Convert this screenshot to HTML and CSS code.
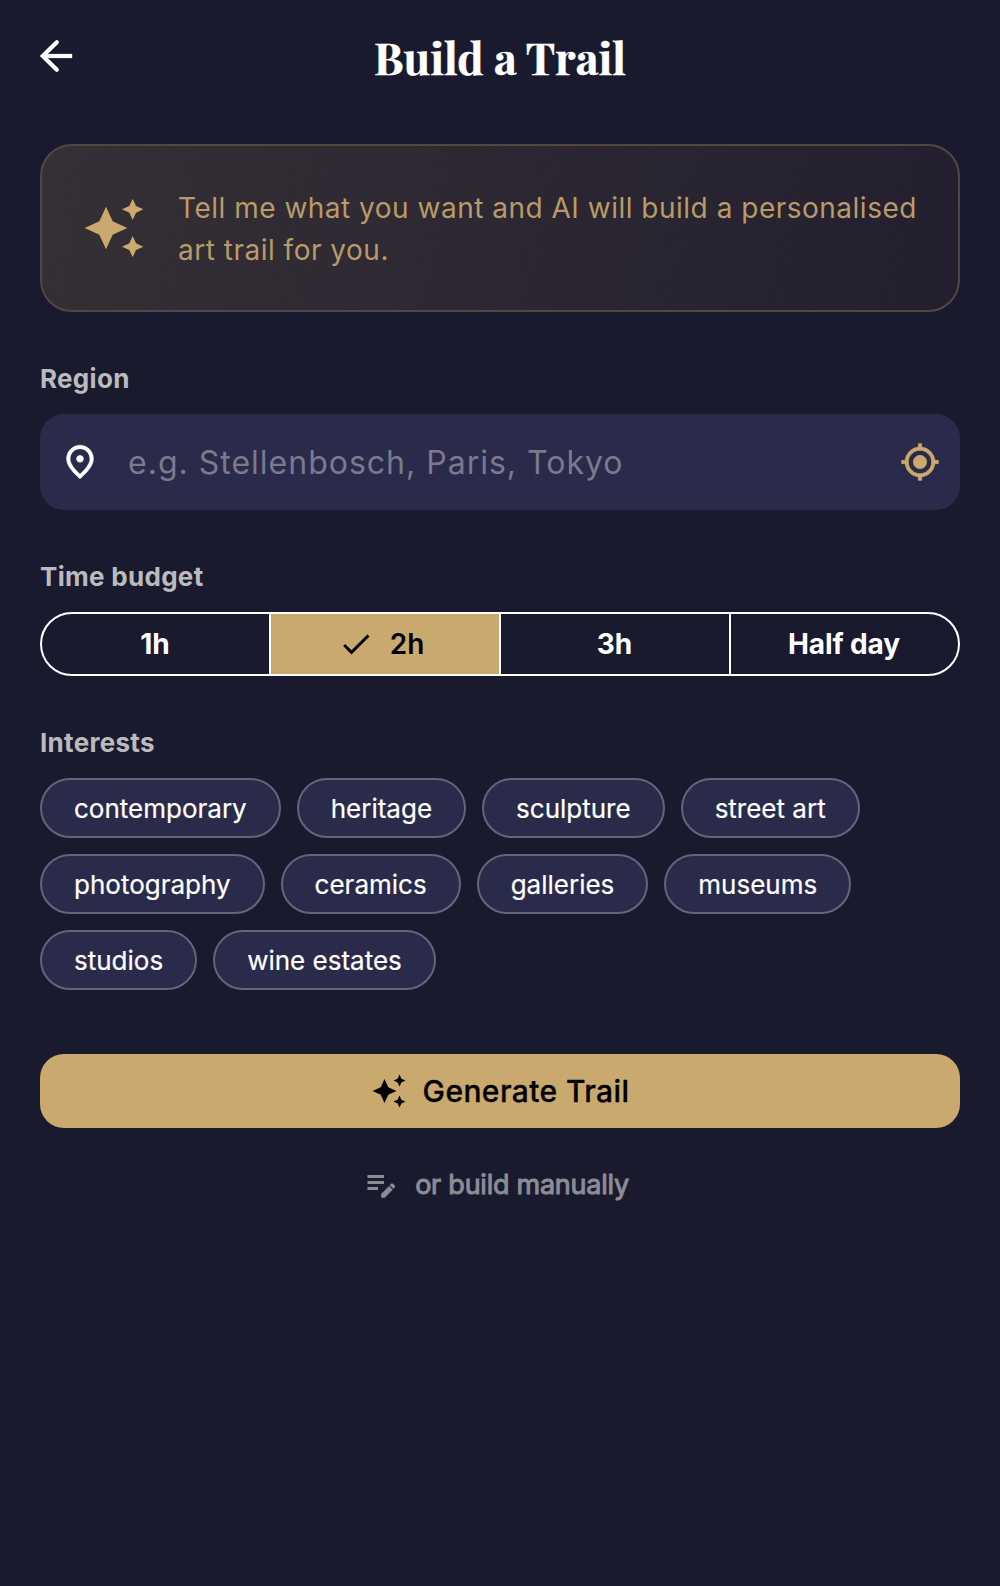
FILE: index.html
```html
<!DOCTYPE html>
<html lang="en">
<head>
  <meta charset="UTF-8" />
  <meta name="viewport" content="width=device-width, initial-scale=1.0"/>
  <title>Build a Trail</title>
  <link rel="stylesheet" href="styles.css">
</head>
<body>

  <header class="header">
    <button class="back-btn" aria-label="Back">
      <svg viewBox="0 0 24 24"><path d="M20.1 12H5.4"/><path d="M12.4 5.1L5.4 12l7 6.9" stroke-linecap="round"/></svg>
    </button>
    <h1>Build a Trail</h1>
  </header>

  <main class="content">
    <div class="intro">
      <svg viewBox="0 0 24 24"><path d="M19 9l1.25-2.75L23 5l-2.75-1.25L19 1l-1.25 2.75L15 5l2.75 1.25L19 9zm-7.5.5L9 4 6.5 9.5 1 12l5.5 2.5L9 20l2.5-5.5L17 12l-5.5-2.5zM19 15l-1.25 2.75L15 19l2.75 1.25L19 23l1.25-2.75L23 19l-2.75-1.25L19 15z"/></svg>
      <p>Tell me what you want and AI will build a personalised art trail for you.</p>
    </div>

    <h2>Region</h2>
    <div class="field">
      <svg class="pin" viewBox="0 0 24 24"><path d="M12 2c4.2 0 8 3.22 8 8.2 0 3.32-2.67 7.25-8 11.8-5.33-4.55-8-8.48-8-11.8C4 5.22 7.8 2 12 2zm6 8.2C18 6.57 15.35 4 12 4s-6 2.57-6 6.2c0 2.34 1.95 5.44 6 9.14 4.05-3.7 6-6.8 6-9.14z"/><circle cx="12" cy="10.1" r="2"/></svg>
      <input type="text" placeholder="e.g. Stellenbosch, Paris, Tokyo">
      <svg class="locate" viewBox="0 0 24 24"><path d="M12 8c-2.21 0-4 1.79-4 4s1.79 4 4 4 4-1.79 4-4-1.79-4-4-4zm8.94 3A8.994 8.994 0 0 0 13 3.06V1h-2v2.06A8.994 8.994 0 0 0 3.06 11H1v2h2.06A8.994 8.994 0 0 0 11 20.94V23h2v-2.06A8.994 8.994 0 0 0 20.94 13H23v-2h-2.06zM12 19c-3.87 0-7-3.13-7-7s3.13-7 7-7 7 3.13 7 7-3.13 7-7 7z"/></svg>
    </div>

    <h2>Time budget</h2>
    <div class="segments">
      <button>1h</button>
      <button class="selected">
        <svg viewBox="0 0 24 24"><path d="M9 16.17L4.83 12l-1.42 1.41L9 19 21 7l-1.41-1.41z"/></svg>
        2h
      </button>
      <button>3h</button>
      <button>Half day</button>
    </div>

    <h2>Interests</h2>
    <div class="chips">
      <button>contemporary</button>
      <button>heritage</button>
      <button>sculpture</button>
      <button>street art</button>
      <button>photography</button>
      <button>ceramics</button>
      <button>galleries</button>
      <button>museums</button>
      <button>studios</button>
      <button>wine estates</button>
    </div>

    <button class="generate-btn">
      <svg viewBox="0 0 24 24"><path d="M19 9l1.25-2.75L23 5l-2.75-1.25L19 1l-1.25 2.75L15 5l2.75 1.25L19 9zm-7.5.5L9 4 6.5 9.5 1 12l5.5 2.5L9 20l2.5-5.5L17 12l-5.5-2.5zM19 15l-1.25 2.75L15 19l2.75 1.25L19 23l1.25-2.75L23 19l-2.75-1.25L19 15z"/></svg>
      Generate Trail
    </button>
    <button class="manual-btn">
      <svg viewBox="0 0 24 24"><path d="M3 10h11v2H3v-2zm0-2h11V6H3v2zm0 8h7v-2H3v2zm14.8-3.2l.9-.9c.39-.39 1.02-.39 1.41 0l1 1c.39.39.39 1.02 0 1.41l-.9.9-2.41-2.41zm-.4.5l-5.3 5.3V21.2h2.4l5.3-5.3-2.4-2.6z"/></svg>
      or build manually
    </button>
  </main>

</body>
</html>
```

FILE: styles.css
```css
* {
  box-sizing: border-box;
}
body {
  margin: 0;
  min-height: 1586px;
  font-family: Inter, sans-serif;
  background-color: #1a1a2e;
  color: #fff;
}

button {
  display: flex;
  align-items: center;
  justify-content: center;
  margin: 0;
  padding: 0;
  border: none;
  background: none;
  color: #fff;
  font-family: inherit;
  cursor: pointer;
}

svg {
  display: block;
  flex: none;
  fill: currentColor;
}

.header {
  display: grid;
  grid-template-columns: 48px 1fr 48px;
  align-items: center;
  height: 112px;
  padding: 0 32px;
}

.back-btn svg {
  width: 48px;
  height: 48px;
  fill: none;
  stroke: currentColor;
  stroke-width: 2.1;
}

h1 {
  margin: 0;
  padding-top: 2px;
  font-family: "Playfair Display", "Liberation Serif", serif;
  font-size: 44px;
  font-weight: 700;
  line-height: 60px;
  text-align: center;
  -webkit-text-stroke: 0.5px #fff;
}

.content {
  padding: 32px 40px;
}

.intro {
  display: flex;
  align-items: center;
  gap: 32px;
  height: 168px;
  padding: 0 40px;
  border: 2px solid #544741;
  border-radius: 32px;
  background: linear-gradient(100deg, #353035, #231f2f);
  color: #c9a96e;
}

.intro svg {
  width: 64px;
  height: 64px;
}

.intro p {
  margin: 0;
  padding-top: 2px;
  color: #b89b68;
  font-size: 28px;
  line-height: 42px;
  letter-spacing: 0.5px;
}

h2 {
  margin: 51px 0 19px;
  color: #bababf;
  font-size: 26px;
  font-weight: 700;
  line-height: 32px;
  letter-spacing: 0.3px;
}

.field {
  display: flex;
  align-items: center;
  height: 96px;
  padding: 0 20px;
  border-radius: 24px;
  background-color: #2a2a4a;
}

.pin, .locate {
  width: 40px;
  height: 40px;
  stroke: currentColor;
  stroke-width: 0.4;
}

.locate {
  color: #c9a96e;
}

.field input {
  flex: 1;
  min-width: 0;
  padding: 0 0 0 28px;
  border: none;
  outline: none;
  background: none;
  color: #fff;
  font-family: inherit;
  font-size: 32px;
  letter-spacing: 1px;
}

.field input::placeholder {
  color: #7b7a8d;
}

.segments {
  display: grid;
  grid-template-columns: 227fr 230fr 230fr 229fr;
  height: 64px;
  border: 2px solid #fff;
  border-radius: 32px;
  overflow: hidden;
}

.segments button {
  gap: 16px;
  padding-right: 1px;
  font-size: 28px;
  font-weight: 700;
  letter-spacing: -0.1px;
}

.segments button + button {
  border-left: 2px solid #fff;
}

.segments .selected {
  padding-right: 8px;
  background-color: #c9a96e;
  color: #000;
  font-weight: 600;
}

.segments svg {
  width: 36px;
  height: 36px;
}

.chips {
  display: flex;
  flex-wrap: wrap;
  gap: 16px;
}

.chips button {
  height: 60px;
  padding: 0 32px;
  border: 2px solid #65647b;
  border-radius: 30px;
  background-color: #2a2a4a;
  font-size: 26px;
  -webkit-text-stroke: 0.2px #fff;
}

.generate-btn {
  gap: 16px;
  width: 100%;
  height: 74px;
  margin-top: 64px;
  border-radius: 24px;
  background-color: #c9a96e;
  color: #000;
  font-size: 30px;
  font-weight: 500;
  letter-spacing: 0.4px;
  -webkit-text-stroke: 0.3px #000;
}

.generate-btn svg {
  width: 36px;
  height: 36px;
}

.manual-btn {
  gap: 16px;
  height: 48px;
  margin: 32px auto 0;
  padding-right: 8px;
  color: #8c8c96;
  font-size: 27px;
  font-weight: 400;
  letter-spacing: -0.25px;
  -webkit-text-stroke: 1px #8c8c96;
}

.manual-btn svg {
  width: 36px;
  height: 36px;
  stroke: none;
}
```
